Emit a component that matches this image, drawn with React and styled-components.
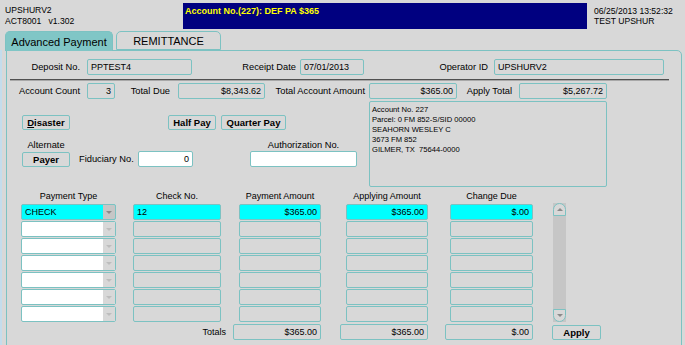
import React from 'react'
import styled, { createGlobalStyle } from 'styled-components'

const TEAL = '#7cc2c2'
const GREY = '#d8d8d8'

const GlobalStyle = createGlobalStyle`
  body {
    margin: 0;
    background: ${GREY};
    font-family: "Liberation Sans", Arial, sans-serif;
    color: #000;
  }
`

const Screen = styled.div`
  width: 685px;
  height: 345px;
  overflow: hidden;
  background: ${GREY};
`

const TopBar = styled.div`
  display: flex;
  height: 31px;
`

const Who = styled.div`
  width: 178px;
  padding: 5px 0 0 5px;
  font-size: 8.6px;
  line-height: 11px;
  white-space: pre;
`

const Banner = styled.div`
  width: 404px;
  height: 26px;
  margin-top: 3px;
  box-sizing: border-box;
  padding: 3px 2px;
  background: #000080;
  color: #ffff00;
  font-weight: bold;
  font-size: 9px;
`

const Stamp = styled.div`
  padding: 6px 0 0 7px;
  font-size: 8.6px;
  line-height: 10px;
`

const TabStrip = styled.div`
  display: flex;
  gap: 3px;
  height: 19px;
  padding-left: 5px;
  position: relative;
  z-index: 1;
`

const Tab = styled.div`
  width: ${p => p.$w}px;
  height: ${p => (p.$active ? 20 : 19)}px;
  box-sizing: border-box;
  border: 1px solid ${TEAL};
  border-bottom: ${p => (p.$active ? 'none' : `1px solid ${TEAL}`)};
  border-radius: 5px 5px 0 0;
  background: ${p => (p.$active ? '#80c6c6' : GREY)};
  font-size: 11px;
  display: flex;
  align-items: center;
  justify-content: center;
`

const Body = styled.div`
  border-left: 2px solid #c4dcec;
  padding-left: 4px;
`

const Panel = styled.div`
  width: 676px;
  height: 300px;
  box-sizing: border-box;
  border: 1px solid ${TEAL};
  border-top-right-radius: 5px;
`

const Row = styled.div`
  display: flex;
  align-items: center;
  height: ${p => p.$h || 16}px;
  margin-top: ${p => p.$mt || 0}px;
`

const Label = styled.div`
  width: ${p => p.$w}px;
  box-sizing: border-box;
  margin-left: ${p => p.$ml || 0}px;
  margin-right: ${p => p.$gap || 0}px;
  padding-left: ${p => p.$pl || 0}px;
  text-align: ${p => p.$align || 'right'};
  font-size: 9.3px;
  white-space: nowrap;
`

const Box = styled.div`
  width: ${p => p.$w}px;
  height: ${p => p.$h || 16}px;
  margin-left: ${p => p.$ml || 0}px;
  box-sizing: border-box;
  border: 1px solid ${TEAL};
  border-radius: 2px;
  background: ${p => p.$bg || 'transparent'};
  padding: 0 3px;
  font-size: 9px;
  display: flex;
  align-items: center;
  justify-content: ${p => (p.$right ? 'flex-end' : 'flex-start')};
  white-space: nowrap;
`

const Divider = styled.div`
  margin: 4px 0 0 3px;
  width: 659px;
  height: 2px;
  box-sizing: border-box;
  border-top: 1px solid #505050;
  border-bottom: 1px solid #a8a8a8;
`

const Middle = styled.div`
  display: flex;
  margin-top: 2px;
`

const LeftCol = styled.div`
  width: 362px;
`

const Btn = styled.button`
  width: ${p => p.$w}px;
  height: 15px;
  margin-left: ${p => p.$ml || 0}px;
  padding: 0;
  border: 1px solid ${TEAL};
  border-radius: 2px;
  background: ${GREY};
  font-family: inherit;
  font-weight: bold;
  font-size: 9.5px;
  color: #000;
  u { text-decoration: underline; }
`

const Address = styled.div`
  width: 238px;
  height: 86px;
  box-sizing: border-box;
  border: 1px solid ${TEAL};
  border-radius: 2px;
  padding: 3px 2px;
  font-size: 7.6px;
  line-height: 10px;
  white-space: pre;
`

const Grid = styled.div`
  display: flex;
  padding-left: 14px;
  margin-top: 3px;
`

const Col = styled.div`
  display: flex;
  flex-direction: column;
  gap: 1px;
  width: ${p => p.$w}px;
  margin-right: ${p => p.$mr || 0}px;
`

const ColHead = styled.div`
  height: 13px;
  line-height: 13px;
  font-size: 9px;
  text-align: center;
  white-space: nowrap;
`

const Combo = styled.div`
  display: flex;
  height: 16px;
  box-sizing: border-box;
  border: 1px solid ${TEAL};
  border-radius: 2px;
  background: ${p => (p.$active ? '#00ffff' : '#fff')};
  overflow: hidden;
`

const ComboText = styled.div`
  flex: 1;
  padding-left: 3px;
  font-size: 9px;
  display: flex;
  align-items: center;
`

const ComboArrow = styled.div`
  width: 12px;
  background: ${p => (p.$active ? '#c6c6c6' : GREY)};
  display: flex;
  align-items: center;
  justify-content: center;
  &::after {
    content: '';
    border-left: 3px solid transparent;
    border-right: 3px solid transparent;
    border-top: 3px solid ${p => (p.$active ? '#8a8a8a' : '#bdbdbd')};
  }
`

const TotalsLabel = styled.div`
  height: 16px;
  line-height: 16px;
  margin-top: 1px;
  margin-right: -5px;
  font-size: 9px;
  text-align: right;
`

const Total = styled(Box)`
  margin-top: 1px;
`

const ScrollCol = styled.div`
  width: 13px;
  display: flex;
  flex-direction: column;
`

const Scroll = styled.div`
  margin-top: 13px;
  height: 119px;
  display: flex;
  flex-direction: column;
  background: #c6c6c6;
`

const ScrollBtn = styled.div`
  height: 13px;
  box-sizing: border-box;
  border: 1px solid ${TEAL};
  border-radius: ${p => (p.$up ? '7px 7px 0 0' : '0 0 7px 7px')};
  background: ${GREY};
  display: flex;
  align-items: center;
  justify-content: center;
  &::after {
    content: '';
    border-left: 3px solid transparent;
    border-right: 3px solid transparent;
    ${p => (p.$up ? 'border-bottom' : 'border-top')}: 3px solid #8a8a8a;
  }
`

const Track = styled.div`
  flex: 1;
`

const ApplyBtn = styled(Btn)`
  margin-top: 3px;
  margin-left: -1px;
`

const rows = [0, 1, 2, 3, 4, 5, 6]

export default function App() {
  return (
    <Screen>
      <GlobalStyle />
      <TopBar>
        <Who>{'UPSHURV2\nACT8001   v1.302'}</Who>
        <Banner>Account No.(227): DEF PA $365</Banner>
        <Stamp>
          06/25/2013 13:52:32
          <br />
          TEST UPSHUR
        </Stamp>
      </TopBar>

      <TabStrip>
        <Tab $w={108} $active>Advanced Payment</Tab>
        <Tab $w={105}>REMITTANCE</Tab>
      </TabStrip>

      <Body>
        <Panel>
          <Row $mt={8}>
            <Label $w={73} $gap={7}>Deposit No.</Label>
            <Box $w={105}>PPTEST4</Box>
            <Label $w={104} $gap={4}>Receipt Date</Label>
            <Box $w={64}>07/01/2013</Box>
            <Label $w={124} $gap={6}>Operator ID</Label>
            <Box $w={170}>UPSHURV2</Box>
          </Row>

          <Divider />

          <Row $mt={2}>
            <Label $w={73} $gap={7}>Account Count</Label>
            <Box $w={28} $right>3</Box>
            <Label $w={55} $gap={8}>Total Due</Label>
            <Box $w={87} $right>$8,343.62</Box>
            <Label $w={100} $gap={4}>Total Account Amount</Label>
            <Box $w={88} $right>$365.00</Box>
            <Label $w={55} $gap={7}>Apply Total</Label>
            <Box $w={88} $right>$5,267.72</Box>
          </Row>

          <Middle>
            <LeftCol>
              <Row $h={15} $mt={14}>
                <Btn $w={48} $ml={15}><u>D</u>isaster</Btn>
                <Btn $w={48} $ml={98}>Half Pay</Btn>
                <Btn $w={65} $ml={5}>Quarter Pay</Btn>
              </Row>
              <Row $h={12} $mt={9}>
                <Label $w={63} $pl={15} $align="center">Alternate</Label>
                <Label $w={107} $ml={180} $align="center">Authorization No.</Label>
              </Row>
              <Row $h={16}>
                <Btn $w={48} $ml={15}>Payer</Btn>
                <Label $w={54} $ml={9} $gap={5} $align="left">Fiduciary No.</Label>
                <Box $w={55} $bg="#fff" $right>0</Box>
                <Box $w={107} $bg="#fff" $ml={57} />
              </Row>
            </LeftCol>
            <Address>
              {'Account No. 227\nParcel: 0 FM 852-S/SID 00000\nSEAHORN WESLEY C\n3673 FM 852\nGILMER, TX  75644-0000'}
            </Address>
          </Middle>

          <Grid>
            <Col $w={95} $mr={17}>
              <ColHead>Payment Type</ColHead>
              {rows.map(i => (
                <Combo key={i} $active={i === 0}>
                  <ComboText>{i === 0 ? 'CHECK' : ''}</ComboText>
                  <ComboArrow $active={i === 0} />
                </Combo>
              ))}
            </Col>
            <Col $w={88} $mr={18}>
              <ColHead>Check No.</ColHead>
              {rows.map(i => (
                <Box key={i} $w={88} $bg={i === 0 ? '#00ffff' : undefined}>
                  {i === 0 ? '12' : ''}
                </Box>
              ))}
              <TotalsLabel>Totals</TotalsLabel>
            </Col>
            <Col $w={82} $mr={25}>
              <ColHead>Payment Amount</ColHead>
              {rows.map(i => (
                <Box key={i} $w={82} $right $bg={i === 0 ? '#00ffff' : undefined}>
                  {i === 0 ? '$365.00' : ''}
                </Box>
              ))}
              <Total $w={88} $ml={-6} $right>$365.00</Total>
            </Col>
            <Col $w={82} $mr={22}>
              <ColHead>Applying Amount</ColHead>
              {rows.map(i => (
                <Box key={i} $w={82} $right $bg={i === 0 ? '#00ffff' : undefined}>
                  {i === 0 ? '$365.00' : ''}
                </Box>
              ))}
              <Total $w={88} $ml={-6} $right>$365.00</Total>
            </Col>
            <Col $w={83} $mr={20}>
              <ColHead>Change Due</ColHead>
              {rows.map(i => (
                <Box key={i} $w={83} $right $bg={i === 0 ? '#00ffff' : undefined}>
                  {i === 0 ? '$.00' : ''}
                </Box>
              ))}
              <Total $w={88} $ml={-5} $right>$.00</Total>
            </Col>
            <ScrollCol>
              <Scroll>
                <ScrollBtn $up />
                <Track />
                <ScrollBtn />
              </Scroll>
              <ApplyBtn $w={49}>Apply</ApplyBtn>
            </ScrollCol>
          </Grid>
        </Panel>
      </Body>
    </Screen>
  )
}
